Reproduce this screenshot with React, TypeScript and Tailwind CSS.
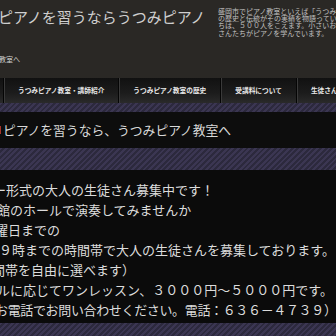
import React from 'react';

const jp = "font-['Noto_Sans_CJK_JP',sans-serif]";

const navItems = [
  'うつみピアノ教室・講師紹介',
  'うつみピアノ教室の歴史',
  '受講料について',
  '生徒さんの声',
];

const lines = [
  { text: 'ー形式の大人の生徒さん募集中です！', cls: '-ml-[7px]' },
  { text: '会館のホールで演奏してみませんか', cls: '-ml-[16px]' },
  { text: '曜日までの', cls: '-ml-[5px]' },
  { text: '９時までの時間帯で大人の生徒さんを募集しております。', cls: '-ml-[1px]' },
  { text: '間帯を自由に選べます）', cls: '-ml-[8px]' },
  { text: 'ベルに応じてワンレッスン、３０００円～５０００円です。', cls: '-ml-[16px]' },
  { text: 'お電話でお問い合わせください。電話：６３６－４７３９）', cls: '-ml-[5px] tracking-[-0.35px]' },
];

function Stripes({ h }: { h: string }) {
  return (
    <div
      className={`${h} w-full bg-[repeating-linear-gradient(135deg,#3b3652_0_2px,#2c293d_2px_4px)]`}
    />
  );
}

export default function App() {
  return (
    <div className={`w-[336px] h-[336px] overflow-hidden bg-[#2a2825] ${jp}`}>
      {/* header */}
      <div className="h-[78px] flex">
        <div className="w-[218px] shrink-0 flex flex-col">
          <div className="h-[34px] flex items-center -ml-[2px] text-[15px] text-[#cfcfcf] whitespace-nowrap">
            ピアノを習うならうつみピアノ
          </div>
          <div className="mt-[21px] -ml-[1px] text-[7px] leading-[8px] text-[#d0d0d0] whitespace-nowrap">
            教室へ
          </div>
        </div>
        <div className="pt-[8px] text-[7px] leading-[7.2px] text-[#c0c0c0] whitespace-nowrap overflow-hidden">
          <p>盛岡市でピアノ教室といえば「うつみピアノ教室」。</p>
          <p>の歴史と伝統がその実績を物語っています。</p>
          <p>ちは、５００人をこえます。小さいお子さんから</p>
          <p>さんたちがピアノを学んでいます。</p>
        </div>
      </div>

      {/* nav */}
      <div className="h-[25px] flex items-stretch bg-[linear-gradient(#111111,#1c1c1c_60%,#2a2a2a)] pl-[3px]">
        {navItems.map((item) => (
          <div
            key={item}
            className="flex items-center border-l border-l-[#050505] shadow-[inset_1px_0_0_#3a3a3a] px-[14px] text-[6.7px] font-bold text-[#e8e8e8] whitespace-nowrap"
          >
            {item}
          </div>
        ))}
      </div>

      <Stripes h="h-[9px]" />

      {/* page heading */}
      <div className="h-[36px] bg-[#0d0d0d] flex items-center whitespace-nowrap">
        <span className="w-[1px] h-[8px] bg-[#a8342a] mr-[2px]" />
        <span className="text-[12.8px] text-[#d8d8d8]">ピアノを習うなら、うつみピアノ教室へ</span>
      </div>

      <Stripes h="h-[22px]" />

      {/* content */}
      <div className="h-[153px] bg-[#0b0b0b] pt-[10px] text-[13px] leading-[20px] text-[#dcdcdc] whitespace-nowrap">
        {lines.map((l) => (
          <p key={l.text} className={l.cls}>
            {l.text}
          </p>
        ))}
      </div>

      <Stripes h="h-[13px]" />
    </div>
  );
}
